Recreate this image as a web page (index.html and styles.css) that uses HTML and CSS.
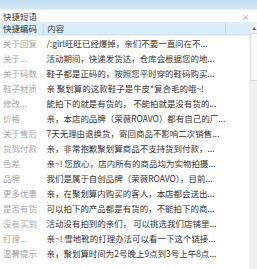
FILE: index.html
```html
<!DOCTYPE html>
<html lang="zh-CN">
<head>
  <meta charset="UTF-8" />
  <title>快捷短语</title>
  <link rel="stylesheet" href="styles.css">
</head>
<body>
  <div class="frame">
    <div class="page">
      <div class="topbar"></div>
      <div class="title">
        <span>快捷短语</span>
        <span class="close">×</span>
      </div>
      <div class="body">
        <div class="grid">
          <div class="head">
            <div class="code">快捷编码</div>
            <div class="text">内容</div>
            <div class="rest"></div>
          </div>
          <div class="row"><div class="code">关于回复</div><div class="text">/:girl旺旺已经爆掉，亲们不要一直问在不...</div></div>
          <div class="row"><div class="code">关于...</div><div class="text">活动期间，快递发货达，仓库会根据您的地...</div></div>
          <div class="row"><div class="code">关于码数</div><div class="text">鞋子都是正码的，按照您平时穿的鞋码购买...</div></div>
          <div class="row"><div class="code">鞋子材质</div><div class="text">亲 聚划算的这款鞋子是牛皮*复合毛的哦~!</div></div>
          <div class="row"><div class="code">修改...</div><div class="text">能拍下的就是有货的， 不能拍就是没有货的...</div></div>
          <div class="row"><div class="code">价格</div><div class="text">亲，本店的品牌（荣薇ROAVO）都有自己的厂...</div></div>
          <div class="row"><div class="code">关于售后</div><div class="text">7天无理由退换货，寄回商品不影响二次销售...</div></div>
          <div class="row"><div class="code">货到付款</div><div class="text">亲，非常抱歉聚划算商品不支持货到付款，...</div></div>
          <div class="row"><div class="code">色差</div><div class="text">亲~! 您放心，店内所有的商品均为实物拍摄...</div></div>
          <div class="row"><div class="code">品牌</div><div class="text">我们是属于自创品牌（荣薇ROAVO），目前...</div></div>
          <div class="row"><div class="code">更多优惠</div><div class="text">亲，在聚划算内购买的客人，本店都会送出...</div></div>
          <div class="row"><div class="code">是否有货</div><div class="text">可以拍下的产品都是有货的，不能拍下的商...</div></div>
          <div class="row"><div class="code">没有买到</div><div class="text">活动没有拍到的亲们， 可以挑选我们店铺里...</div></div>
          <div class="row"><div class="code">打理...</div><div class="text">亲~! 雪地靴的打理办法可以看一下这个链接...</div></div>
          <div class="row"><div class="code">温馨提示</div><div class="text">亲，聚划算时间为2号晚上9点到3号上午8点...</div></div>
        </div>
        <div class="scrollbar">
          <div class="arrow"><span class="tri"></span></div>
          <div class="thumb"></div>
        </div>
      </div>
    </div>
  </div>
</body>
</html>
```

FILE: styles.css
```css
html, body {
  margin: 0;
  padding: 0;
  overflow: hidden;
}
body {
  background: #fff;
}
.frame {
  width: 257px;
  height: 269px;
  overflow: hidden;
}
/* drawn at 4/3 size, then shrunk like the original capture */
.page {
  width: 343px;
  height: 359px;
  transform: scale(0.75);
  transform-origin: 0 0;
  font-family: "Noto Sans CJK SC", "Liberation Sans", sans-serif;
  font-size: 11.3px;
  color: #333;
  overflow: hidden;
}
.topbar {
  height: 13px;
  background: linear-gradient(#c2def4, #d6eaf8);
}
.title {
  height: 17px;
  line-height: 17px;
  padding-left: 4px;
  display: flex;
  justify-content: space-between;
  border-bottom: 1px solid #c9dbe8;
}
.close {
  width: 32px;
  text-align: center;
  color: #999;
  font-size: 11px;
}
.body {
  display: flex;
}
.grid {
  width: 333px;
}
.head {
  display: flex;
  height: 15px;
  line-height: 15px;
  background: #d9edfa;
  border-bottom: 1px solid #c8dcea;
}
.head .code {
  border-right: 1px solid #b9d3e6;
}
.head .text {
  width: 237px;
  flex: none;
  border-right: 1px solid #b9d3e6;
}
.head .rest {
  flex: 1;
}
.row {
  display: flex;
  height: 20px;
  line-height: 20px;
}
.code {
  width: 53px;
  flex: none;
  padding-left: 4px;
  white-space: nowrap;
  overflow: hidden;
  color: #a6a6a6;
}
.head .code {
  color: #333;
}
.text {
  flex: 1;
  padding-left: 5px;
  white-space: nowrap;
  color: #333;
}
.scrollbar {
  width: 9px;
  height: 328px;
  background: #f0f0f0;
  border-left: 1px solid #e0e0e0;
  overflow: hidden;
}
.arrow {
  height: 13px;
  padding: 5px 0 0 2px;
  box-sizing: border-box;
  background: #f4f4f4;
}
.tri {
  display: block;
  width: 0;
  height: 0;
  border-left: 3px solid transparent;
  border-right: 3px solid transparent;
  border-bottom: 4px solid #777;
}
.thumb {
  width: 15px;
  height: 62px;
  background: #fbfbfb;
  border: 1px solid #cfcfcf;
  border-radius: 2px;
}
```
